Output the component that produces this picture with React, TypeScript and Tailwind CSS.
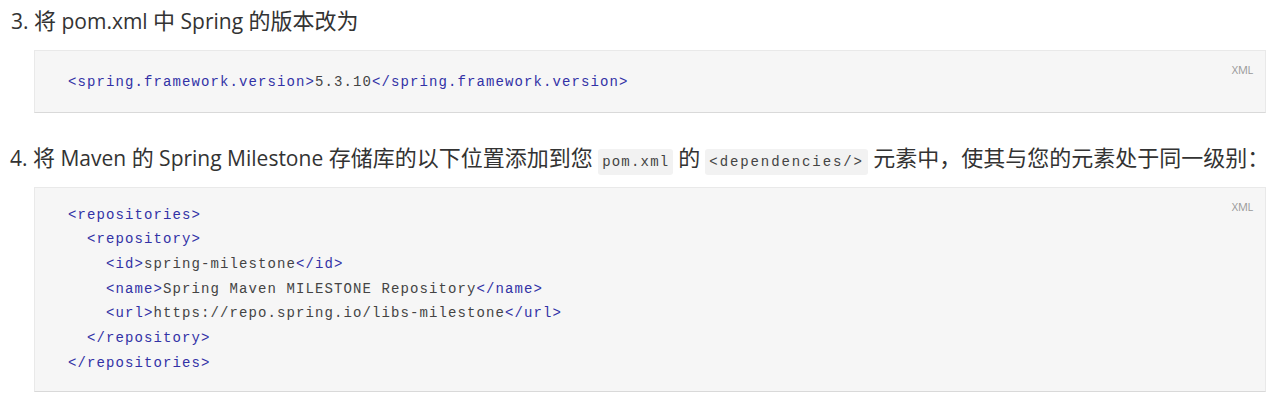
import React from "react";

const sans = { fontFamily: '"Open Sans", "Noto Sans CJK SC", sans-serif' };
const mono = { fontFamily: '"Liberation Mono", "DejaVu Sans Mono", monospace' };

type Line = { indent: number; parts: { t: string; tag?: boolean }[] };

const versionLines: Line[] = [
  {
    indent: 0,
    parts: [
      { t: "<spring.framework.version>", tag: true },
      { t: "5.3.10" },
      { t: "</spring.framework.version>", tag: true },
    ],
  },
];

const repoLines: Line[] = [
  { indent: 0, parts: [{ t: "<repositories>", tag: true }] },
  { indent: 1, parts: [{ t: "<repository>", tag: true }] },
  {
    indent: 2,
    parts: [
      { t: "<id>", tag: true },
      { t: "spring-milestone" },
      { t: "</id>", tag: true },
    ],
  },
  {
    indent: 2,
    parts: [
      { t: "<name>", tag: true },
      { t: "Spring Maven MILESTONE Repository" },
      { t: "</name>", tag: true },
    ],
  },
  {
    indent: 2,
    parts: [
      { t: "<url>", tag: true },
      { t: "https://repo.spring.io/libs-milestone" },
      { t: "</url>", tag: true },
    ],
  },
  { indent: 1, parts: [{ t: "</repository>", tag: true }] },
  { indent: 0, parts: [{ t: "</repositories>", tag: true }] },
];

// the CJK glyphs render a little larger than the latin text
function Mixed({ text }: { text: string }) {
  const runs = text.split(/([\u3000-\u9fff\uff00-\uffef]+)/);
  return (
    <>
      {runs.map((r, i) =>
        i % 2 === 1 ? (
          <span key={i} className="text-[22px]">
            {r}
          </span>
        ) : (
          <React.Fragment key={i}>{r}</React.Fragment>
        )
      )}
    </>
  );
}

function CodeBlock({ lines, className }: { lines: Line[]; className: string }) {
  return (
    <div
      className={
        "relative ml-[34px] mr-[16px] bg-[#f6f6f6] border border-[#e9e9e9] border-b-[#d9d9d9] pl-[33px] " +
        className
      }
    >
      <span
        className="absolute right-[12px] top-[11px] text-[11px] text-[#999] tracking-tight"
        style={sans}
      >
        XML
      </span>
      <pre className="text-[14px] leading-[24.67px] tracking-[1.1px] text-[#444]" style={mono}>
        {lines.map((line, i) => (
          <div key={i}>
            {"  ".repeat(line.indent)}
            {line.parts.map((p, j) => (
              <span key={j} className={p.tag ? "text-[#3232a6]" : ""}>
                {p.t}
              </span>
            ))}
          </div>
        ))}
      </pre>
    </div>
  );
}

function InlineCode({ children, className }: { children: React.ReactNode; className: string }) {
  return (
    <code
      className={"bg-[#f2f2f2] rounded-[3px] px-[4px] py-[5px] text-[14px] text-[#444] " + className}
      style={mono}
    >
      {children}
    </code>
  );
}

export default function App() {
  return (
    <div className="w-[1282px] h-[400px] bg-white overflow-hidden pt-[7px]">
      <p
        className="pl-[11px] h-[26px] text-[21px] leading-[26px] text-[#333] mb-[17px] whitespace-nowrap"
        style={sans}
      >
        <Mixed text="3. 将 pom.xml 中 Spring 的版本改为" />
      </p>
      <CodeBlock lines={versionLines} className="pt-[19px] pb-[17px]" />
      <p
        className="pl-[10px] h-[26px] mt-[31px] text-[21px] leading-[26px] text-[#333] mb-[17px] whitespace-nowrap"
        style={sans}
      >
        <Mixed text="4. 将 Maven 的 Spring Milestone 存储库的以下位置添加到您 " />
        <InlineCode className="tracking-[1.2px]">pom.xml</InlineCode>
        <span className="text-[22px] mx-[5px]">的</span>
        <InlineCode className="tracking-[1.9px]">&lt;dependencies/&gt;</InlineCode>{" "}
        <Mixed text="元素中，使其与您的元素处于同一级别：" />
      </p>
      <CodeBlock lines={repoLines} className="pt-[15px] pb-[16px]" />
    </div>
  );
}
